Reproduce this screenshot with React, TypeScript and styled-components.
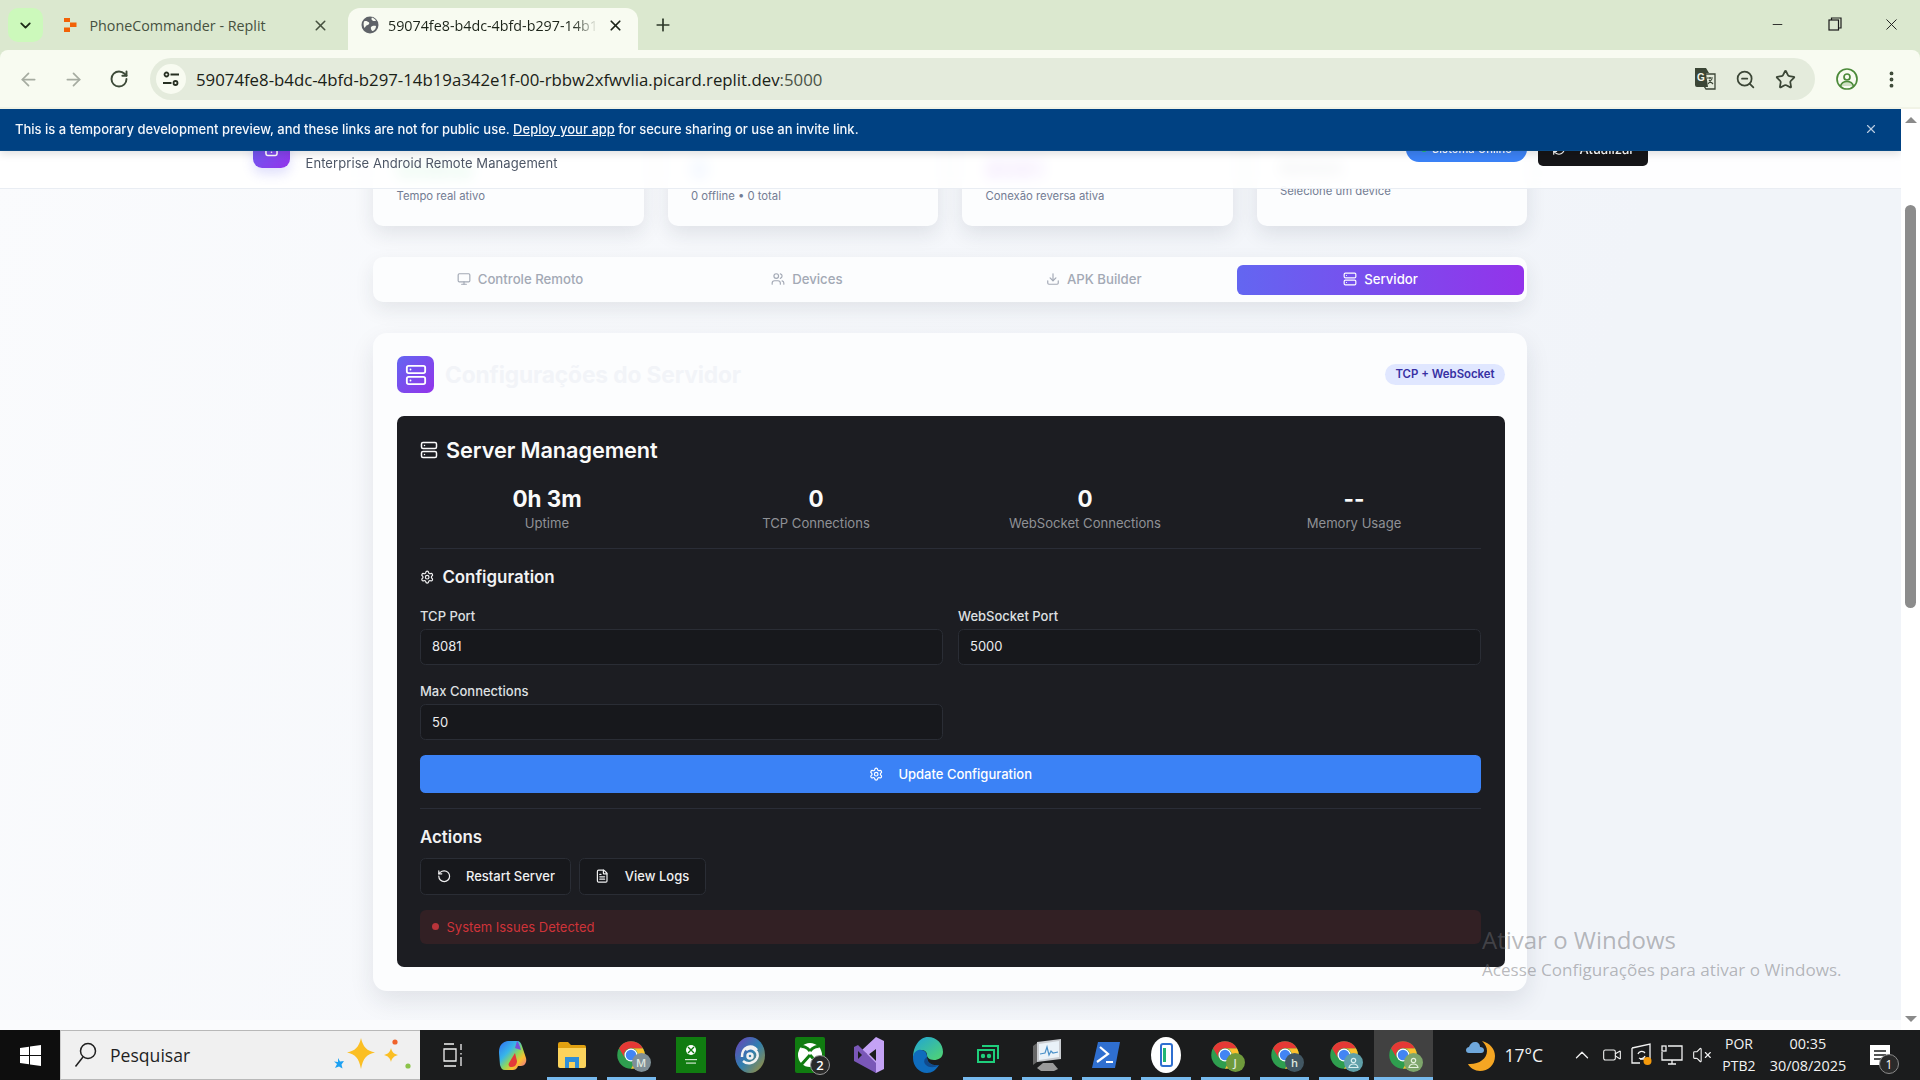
import React from "react";
import styled, { createGlobalStyle } from "styled-components";
import {
  ArrowLeft, ArrowRight, RotateCw, X, Plus, ChevronDown, Star, ZoomOut, EllipsisVertical,
  Server, Monitor, Users, Download, Settings, RotateCcw, FileText, RefreshCw, Smartphone, Minus,
  ChevronUp, VolumeX, Video,
} from "lucide-react";

const Global = createGlobalStyle`
  html, body { margin: 0; padding: 0; background: #fff; overflow: hidden; }
  * { box-sizing: border-box; }
`;

const UI = `"Open Sans", "Noto Sans", sans-serif`;
const WEB = `Inter, "Liberation Sans", sans-serif`;

const Screen = styled.div`
  width: 1920px; height: 1080px; display: flex; flex-direction: column; overflow: hidden; font-family: ${WEB};
`;

/* ---------- browser chrome ---------- */
const BrowserChrome = styled.div`
  height: 109px; flex: none; background: #dbe8cf; display: flex; flex-direction: column;
`;
const TabStrip = styled.div`
  height: 50px; display: flex; align-items: flex-end; padding-left: 8px; position: relative;
`;
const TabSwitcher = styled.div`
  width: 35px; height: 34px; margin-bottom: 8px; border-radius: 10px; background: #ccf9bb; color: #1c2a17;
  display: flex; align-items: center; justify-content: center;
`;
const Tab = styled.div<{ $active?: boolean }>`
  height: 42px; flex: none; width: ${p => (p.$active ? "290px" : "305px")};
  padding: ${p => (p.$active ? "0 14px 8px 12.5px" : "0 19px 8px 20px")};
  display: flex; align-items: center; gap: ${p => (p.$active ? "9.5px" : "12.5px")};
  border-radius: 12px 12px 0 0; background: ${p => (p.$active ? "#f8fbf1" : "transparent")};
  color: ${p => (p.$active ? "#1c2419" : "#46513f")};
  font: 400 14.3px ${UI}; white-space: nowrap;
`;
const TabTitle = styled.span<{ $fade?: boolean }>`
  flex: 1; overflow: hidden; ${p => p.$fade ? "-webkit-mask-image: linear-gradient(90deg,#000 88%,transparent);" : ""}
`;
const NewTab = styled.div`
  width: 24px; height: 42px; margin-left: 13px; padding-bottom: 8px; display: flex; align-items: center; justify-content: center; color: #2c3728;
`;
const WindowControls = styled.div`
  margin-left: auto; height: 50px; display: flex; align-items: center; color: #1a1a1a;
`;
const WinButton = styled.div`
  width: 57px; display: flex; justify-content: center; align-items: center; height: 48px; padding-bottom: 2px;
`;
const Toolbar = styled.div`
  height: 59px; background: #f8fbf1; border-radius: 8px 8px 0 0; display: flex; align-items: flex-start; padding: 8px 0 0 6px;
  border-bottom: 2px solid #f1f3e6;
`;
const NavButton = styled.div<{ $dim?: boolean }>`
  width: 45px; height: 42px; display: flex; align-items: center; justify-content: center;
  color: ${p => (p.$dim ? "#a6aca1" : "#3d4a38")};
`;
const AddressBar = styled.div`
  width: 1665px; margin-left: 9px; height: 42px; border-radius: 21px; background: #e4ebdc;
  display: flex; align-items: center; padding: 0 19px 0 6px; color: #1a2117; font: 400 16.8px ${UI};
`;
const SiteInfo = styled.div`
  width: 30px; height: 30px; border-radius: 50%; background: #f8fbf1; margin-right: 10px; display: flex; align-items: center; justify-content: center;
`;
const UrlPort = styled.span`color: #4a5346;`;
const AddressIcons = styled.div`
  margin-left: auto; display: flex; align-items: center; gap: 19px; color: #3b4636;
`;
const ToolEnd = styled.div`
  height: 42px; display: flex; align-items: center; color: #3d4a38; margin-left: 20px; gap: 22px;
`;

/* ---------- page ---------- */
const Body = styled.div`height: 921px; flex: none; display: flex;`;
const Viewport = styled.div`
  width: 1901px; position: relative; overflow: hidden; background: #fafbfd;
`;
const PageBg = styled.div`
  height: 911px; overflow: hidden; background: linear-gradient(105deg, #fafbfd 0%, #f1f4f9 78%);
  padding: 0 374px 0 373px;
`;
const StatGrid = styled.div`
  display: grid; grid-template-columns: repeat(4, 1fr); gap: 24px;
`;
const StatCard = styled.div`
  height: 117px; padding: 47px 23.5px 0; border-radius: 10px; background: #fcfdfe;
  box-shadow: 0 8px 20px rgba(30,41,59,.10);
`;
const StatCardValue = styled.div<{ $color: string; $small?: boolean }>`
  font-size: ${p => (p.$small ? "15px" : "24px")}; font-weight: 700; color: ${p => p.$color};
  height: ${p => (p.$small ? "24px" : "28px")}; line-height: ${p => (p.$small ? "24px" : "28px")};
  margin-bottom: ${p => (p.$small ? "3px" : "4px")};
`;
const StatCardSub = styled.div`font-size: 11.3px; line-height: 16px; color: #737c93;`;

const TabBar = styled.div`
  margin-top: 31px; height: 45px; padding: 7.5px 3px 7.5px 3.6px; border-radius: 10px; background: #fcfdfe;
  box-shadow: 0 8px 20px rgba(30,41,59,.09); display: grid; grid-template-columns: repeat(4, 1fr);
`;
const PageTab = styled.div<{ $active?: boolean }>`
  height: 30px; border-radius: 6px; display: flex; align-items: center; justify-content: center; gap: 7px; padding-bottom: 1px;
  font-size: 13.2px; font-weight: 500; color: ${p => (p.$active ? "#fff" : "#a3a9b5")};
  background: ${p => (p.$active ? "linear-gradient(90deg,#6366f1,#9333ea)" : "transparent")};
`;
const Panel = styled.section`
  margin-top: 31px; height: 658px; padding: 23px 22px 0 24px; border-radius: 14px; background: #fcfdfe;
  box-shadow: 0 10px 24px rgba(30,41,59,.10);
`;
const PanelHeader = styled.div`display: flex; align-items: center; gap: 11px; height: 37px;`;
const IconTile = styled.div`
  width: 37px; height: 37px; border-radius: 7px; color: #fff; display: flex; align-items: center; justify-content: center;
  background: linear-gradient(135deg,#6366f1,#9333ea);
`;
const PanelTitle = styled.h2`margin: 0; font-size: 22.7px; font-weight: 700; color: #f2f4f8; letter-spacing: -.1px;`;
const Badge = styled.span`
  margin-left: auto; height: 21px; padding: 0 10.4px 1px; border-radius: 11px; background: #e0e7ff; color: #3730a3;
  font-size: 11.4px; font-weight: 600; display: flex; align-items: center;
`;
const DarkCard = styled.div`
  margin-top: 23px; height: 551px; padding: 20px 24px 0 23px; border-radius: 7px; background: #1c1d22; color: #fafafa;
`;
const DarkTitle = styled.h3`
  margin: 0; height: 28px; display: flex; align-items: center; gap: 8px; font-size: 21.7px; font-weight: 600; letter-spacing: -.08px;
`;
const Metrics = styled.div`
  margin-top: 21px; padding-bottom: 16px; border-bottom: 1px solid #2a2d37; display: grid; grid-template-columns: repeat(4, 1fr); gap: 15px;
`;
const Metric = styled.div`text-align: center;`;
const MetricValue = styled.div`font-size: 22.4px; line-height: 28px; font-weight: 700;`;
const MetricLabel = styled.div`margin-top: 1px; font-size: 13.1px; line-height: 18px; color: #8f9196;`;
const SectionTitle = styled.h4<{ $mt: number }>`
  margin: ${p => p.$mt}px 0 0; height: 24px; display: flex; align-items: center; gap: 8px; font-size: 16.9px; font-weight: 600; color: #f2f2f3;
`;
const FormGrid = styled.div`
  margin-top: 19px; display: grid; grid-template-columns: 1fr 1fr; column-gap: 15px; row-gap: 18.5px;
`;
const Field = styled.div``;
const FieldLabel = styled.div`font-size: 13px; font-weight: 500; line-height: 16px; color: #dfe0e2; margin-bottom: 4.5px;`;
const FieldInput = styled.div`
  height: 36.4px; padding: 0 11px 1px; display: flex; align-items: center; border-radius: 5.5px; background: #17181c;
  border: 1px solid #2a2d35; font-size: 13px; color: #ececee;
`;
const PrimaryButton = styled.div`
  margin-top: 15.1px; height: 38px; border-radius: 5.5px; background: #3b82f6; color: #fff; font-size: 13px; font-weight: 500;
  display: flex; align-items: center; justify-content: center; gap: 15px;
`;
const Divider = styled.div`margin-top: 15px; height: 1px; background: #2a2d37;`;
const ActionRow = styled.div`margin-top: 8.4px; display: flex; gap: 7.5px;`;
const GhostButton = styled.div`
  height: 37px; padding: 0 15.5px; display: flex; align-items: center; gap: 15px; border-radius: 5.5px; background: #17181c;
  border: 1px solid #2a2d35; font-size: 13px; font-weight: 500; color: #f0f0f1;
`;
const Alert = styled.div`
  margin-top: 15.6px; height: 34px; padding: 0 12px 1px; border-radius: 6px; background: #322024; color: #cf3339;
  display: flex; align-items: center; gap: 7.5px; font-size: 13px;
`;
const AlertDot = styled.span`width: 7px; height: 7px; border-radius: 50%; background: #b9343a;`;

/* overlays */
const Header = styled.header`
  position: absolute; left: 0; right: 0; top: 0; height: 80px; padding: 0 253px 0 253px;
  display: flex; align-items: center; gap: 15.5px; background: rgba(255,255,255,.88);
  backdrop-filter: blur(7px); border-bottom: 1px solid #e9edf3;
`;
const BrandTile = styled.div`
  width: 37px; height: 38px; border-radius: 9px; background: linear-gradient(135deg,#6366f1,#9333ea); color: #fff;
  display: flex; align-items: flex-end; justify-content: center; padding-bottom: 11px;
  box-shadow: 0 6px 12px rgba(99,102,241,.2);
`;
const BrandText = styled.div`display: flex; flex-direction: column; justify-content: flex-end; height: 47px;`;
const BrandSub = styled.div`font-size: 13px; line-height: 18px; color: #4d5666; letter-spacing: .08px;`;
const HeaderActions = styled.div`margin-left: auto; display: flex; align-items: center; gap: 11px;`;
const OnlinePill = styled.div`
  width: 121px; height: 26px; border-radius: 13px; background: #3b82f6; color: #fff; font-size: 11.2px; font-weight: 500;
  display: flex; align-items: center; justify-content: center; gap: 5px;
`;
const OnlineDot = styled.span`width: 6px; height: 6px; border-radius: 50%; background: #22c55e;`;
const RefreshBtn = styled.div`
  width: 110px; height: 34px; border-radius: 5px; background: #151518; color: #fff; font-size: 13px; font-weight: 500;
  display: flex; align-items: center; justify-content: center; gap: 14px;
`;
const Banner = styled.div`
  position: absolute; left: 0; right: 0; top: 0; height: 42px; padding: 0 23px 1px 15px; background: #004182; color: #f4f7fb;
  display: flex; align-items: center; font-size: 13px; font-weight: 500; border-bottom: 1px solid #0a4a85;
  box-shadow: 0 3px 8px rgba(0,0,0,.12);
`;
const BannerLink = styled.span`text-decoration: underline; margin: 0 3.4px;`;
const BannerClose = styled.div`margin-left: auto; color: #b9cbe0; display: flex;`;
const Watermark = styled.div`
  position: absolute; left: 1482px; top: 815px; font-family: "Open Sans", sans-serif; color: rgba(110,110,115,.48); pointer-events: none; white-space: nowrap;
`;
const WatermarkTitle = styled.div`font-size: 24px; line-height: 32px;`;
const WatermarkSub = styled.div`font-size: 17.1px; line-height: 24px; margin-top: 2px;`;

/* scrollbar */
const Scrollbar = styled.div`
  width: 19px; background: #fff; display: flex; flex-direction: column; align-items: center; position: relative;
`;
const ScrollArrow = styled.div<{ $down?: boolean }>`
  width: 0; height: 0; border-left: 6.5px solid transparent; border-right: 6.5px solid transparent;
  ${p => (p.$down ? "border-top: 6px solid #8a8a8a; margin-top: auto; margin-bottom: 8px;" : "border-bottom: 6px solid #8a8a8a; margin-top: 8px;")}
`;
const ScrollThumb = styled.div`
  width: 11px; height: 403px; border-radius: 6px; background: #8c8c8c; margin-top: 82px;
`;

/* ---------- taskbar ---------- */
const Taskbar = styled.div`
  height: 50px; flex: none; background: #1b1c1d; color: #f2f2f2; display: flex; align-items: stretch; font-family: ${UI};
`;
const StartButton = styled.div`
  width: 60px; background: #0e0e0e; display: flex; align-items: center; justify-content: center;
`;
const SearchBox = styled.div`
  width: 360px; background: #f0f0f0; border-top: 1px solid #b8b8b8; border-bottom: 1px solid #b8b8b8; border-left: 1px solid #ccc;
  color: #1f1f1f; display: flex; align-items: center; padding-left: 13px; gap: 13px; font-size: 17.6px; position: relative;
`;
const SearchArt = styled.div`margin-left: auto; margin-right: 9px; display: flex;`;
const TaskIcons = styled.div`display: flex; margin-left: 3.5px;`;
const TaskButton = styled.div<{ $on?: boolean; $active?: boolean }>`
  width: 59.4px; position: relative; display: flex; align-items: center; justify-content: center;
  background: ${p => (p.$active ? "#414141" : "transparent")};
  ${p => p.$on ? `&::after { content: ""; position: absolute; left: 5px; right: 5px; bottom: 0; height: 3px; background: #76b9ed; }` : ""}
  ${p => p.$active ? `&::after { left: 0; right: 0; }` : ""}
`;
const AppBadge = styled.span<{ $bg: string }>`
  position: absolute; left: 30px; top: 23px; width: 19px; height: 19px; border-radius: 50%; background: ${p => p.$bg};
  display: flex; align-items: center; justify-content: center; font: 600 11px ${UI}; color: #dfe7df;
`;
const CountBadge = styled.span`
  position: absolute; left: 30px; top: 25px; width: 20px; height: 20px; border-radius: 50%; background: #2a2a2a; border: 1px solid #9a9a9a;
  display: flex; align-items: center; justify-content: center; font: 600 13px ${UI}; color: #fff;
`;
const Weather = styled.div`display: flex; align-items: center; margin-left: 32.7px; gap: 8.6px; font-size: 17.5px;`;
const TrayIcon = styled.div<{ $first?: boolean }>`
  width: 30px; display: flex; align-items: center; justify-content: center; margin-left: ${p => (p.$first ? "24px" : "0")}; position: relative;
`;
const Lang = styled.div`
  width: 36px; margin-left: 4px; display: flex; flex-direction: column; align-items: center; justify-content: center; gap: 4px; font-size: 14px; line-height: 18px;
`;
const Clock = styled.div`
  width: 76px; margin-left: 13px; display: flex; flex-direction: column; align-items: center; justify-content: center; gap: 4px; font-size: 14.4px; line-height: 18px; white-space: nowrap;
`;
const Notification = styled.div`
  width: 34px; margin-left: 17px; position: relative; display: flex; align-items: center; justify-content: center;
`;
const NotifCount = styled.span`
  position: absolute; left: 16px; top: 24px; width: 20px; height: 20px; border-radius: 50%; background: #2a2a2a; border: 1px solid #8a8a8a;
  display: flex; align-items: center; justify-content: center; font-size: 12px; color: #fff;
`;

/* ---------- drawn icons ---------- */
const ReplitLogo = () => (
  <svg width="14" height="16" viewBox="0 0 14 16"><path fill="#f26207" d="M1 1h6v4H1zM7 5.5h6.5v4.5H7zM1 10.5h6V15H1z" /></svg>
);
const FilledGlobe = () => (
  <svg width="18" height="18" viewBox="0 0 18 18">
    <circle cx="9" cy="9" r="8.500" fill="#5f6368" />
    <path fill="#f8fbf1" d="M3 5.500c2-1 3 0 4.500.5 1 .5 1 2 0 2.500-1 .8-2 .5-2.500 1.500L3.500 12C2.500 10 2.300 7.500 3 5.500zM11 1.500c1.500.5 3 1.500 4 3-1 1-2.500.5-3.500 0-1-.5-1.500-2-.5-3zM10 11c1-1 3-1.500 5-1 0 2-1 4-3 5-1.500 0-2.500-2.500-2-4z" />
  </svg>
);
const SiteTune = () => (
  <svg width="18" height="18" viewBox="0 0 18 18" fill="none" stroke="#273022" strokeWidth="1.8">
    <circle cx="4.5" cy="4.5" r="2" /><path d="M8.5 4.5H17M1 13h8.5" /><circle cx="13.5" cy="13" r="2" />
  </svg>
);
const TranslateIcon = () => (
  <svg width="22" height="24" viewBox="0 0 22 24">
    <path fill="#3b4636" d="M1 1h11l3 5h-3l2 14H3a2 2 0 0 1-2-2z" />
    <path fill="none" stroke="#3b4636" strokeWidth="1.3" d="M10 7h11v15H12l-2-3" />
    <text x="3" y="14" fontSize="10" fontWeight="700" fill="#f3f5ec" fontFamily="Liberation Sans">G</text>
    <path stroke="#3b4636" strokeWidth="1.2" d="M13 11h6M16 10v2M14 17l4-5M15 13l4 4" fill="none" />
  </svg>
);
const ProfileIcon = () => (
  <svg width="24" height="24" viewBox="0 0 24 24" fill="none" stroke="#4c8a3a" strokeWidth="1.7">
    <circle cx="12" cy="12" r="10" /><circle cx="12" cy="10" r="3" /><path d="M5.5 19c1-3.5 4-4.5 6.5-4.5s5.500 1 6.500 4.500" fill="#cfe0c4" />
  </svg>
);
const WinLogo = () => (
  <svg width="21" height="21" viewBox="0 0 21 21" fill="#fff"><path d="M0 3l9-1.300V10H0zM10 1.500 21 0v10H10zM0 11h9v8.300L0 18zM10 11h11v10l-11-1.500z" /></svg>
);
const SearchGlass = () => (
  <svg width="23" height="26" viewBox="0 0 23 26" fill="none" stroke="#1f1f1f" strokeWidth="1.500">
    <circle cx="14" cy="9" r="7.500" /><path d="M9 15L1.500 24.500" />
  </svg>
);
const Sparkles = () => (
  <svg width="80" height="38" viewBox="0 0 80 38">
    <path fill="#fbbf24" d="M30 2c2 9 6 13 14 14.500C36 18 32 22 30 33c-2-11-6-15-14-16.500C24 15 28 11 30 2z" />
    <path fill="#fbbf24" d="M60 12c1 4 3 6 7 7-4 1-6 3-7 7-1-4-3-6-7-7 4-1 6-3 7-7z" />
    <path fill="#1da1f2" d="M7 22l2 3.500 4-.5-2.500 3.500 1 4-3.500-2-4 1.500 2-4-3-2.500 4 .5z" />
    <circle cx="64" cy="6" r="2.600" fill="#f0622a" /><circle cx="77" cy="30" r="2.600" fill="#8bc34a" />
  </svg>
);
const TaskView = () => (
  <svg width="20" height="24" viewBox="0 0 20 24" fill="none" stroke="#f2f2f2" strokeWidth="1.300">
    <path d="M1 1h10M1 23h12M1 6h12v12H1zM18 1v6M18 10v1.500M18 14v9" />
  </svg>
);
const Copilot = () => (
  <svg width="29" height="30" viewBox="0 0 29 30">
    <defs><linearGradient id="cp" x1="0" y1="0" x2="1" y2="1"><stop offset="0" stopColor="#2f6ff5" /><stop offset=".35" stopColor="#38b6e8" /><stop offset=".55" stopColor="#8fd85c" /><stop offset=".72" stopColor="#fbc02d" /><stop offset="1" stopColor="#e85aa8" /></linearGradient></defs>
    <path fill="url(#cp)" d="M10 1h9c3 0 4 2 5 5l4 12c1 4-1 8-5 8h-3l-1 2c-1 1-2 2-4 2H7c-3 0-4-2-5-5L1 13c0-5 1-8 4-10 1-1 3-2 5-2z" />
    <path fill="#e33a3a" d="M11 23l6-10 2 8c0 3-2 6-5 6h-2c-1-1-2-2-1-4z" />
    <path fill="#7a4fd6" d="M19 1c2 2 3 6 4 9l-6-2z" />
  </svg>
);
const Explorer = () => (
  <svg width="28" height="26" viewBox="0 0 28 26">
    <path fill="#e0a010" d="M0 2a2 2 0 0 1 2-2h8l3 3h13a2 2 0 0 1 2 2v6H0z" />
    <path fill="#fbd35c" d="M0 6h28v18a2 2 0 0 1-2 2H2a2 2 0 0 1-2-2z" />
    <path fill="#2f8fd8" d="M7 15h14v11h-4v-6h-6v6H7z" />
  </svg>
);
const ChromeIcon = ({ size = 30 }: { size?: number }) => (
  <svg width={size} height={size} viewBox="0 0 24 24">
    <circle cx="12" cy="12" r="11" fill="#2f9e4f" />
    <path fill="#fbc02d" d="M12 6.500h9.530A11 11 0 0 1 12 23l4.760-8.250A5.500 5.500 0 0 0 12 6.500z" />
    <path fill="#e53935" d="M12 1a11 11 0 0 1 9.530 5.500H12a5.500 5.500 0 0 0-4.760 8.250L2.470 6.500A11 11 0 0 1 12 1z" />
    <circle cx="12" cy="12" r="5.200" fill="#fff" /><circle cx="12" cy="12" r="4.200" fill="#4285f4" />
  </svg>
);
const XCloud = () => (
  <svg width="30" height="36" viewBox="0 0 30 36">
    <rect width="30" height="36" fill="#107c10" />
    <circle cx="15" cy="13" r="5" fill="#fff" />
    <path stroke="#107c10" strokeWidth="1.400" d="M12 10l6 6M18 10l-6 6" />
    <rect x="9" y="22" width="12" height="1.200" fill="#cfe6cf" /><rect x="10" y="25.500" width="10" height="1.200" fill="#cfe6cf" />
  </svg>
);
const Ubisoft = () => (
  <svg width="30" height="36" viewBox="0 0 30 36">
    <defs><linearGradient id="ub" x1="0" y1="0" x2="1" y2="1"><stop offset="0" stopColor="#6e3fb8" /><stop offset=".5" stopColor="#2f7fb0" /><stop offset="1" stopColor="#a9912f" /></linearGradient></defs>
    <ellipse cx="15" cy="18" rx="15" ry="18" fill="url(#ub)" />
    <g fill="none" stroke="#f2f2f2" strokeWidth="2.500"><path d="M7 20a8.500 10 0 0 1 15-7" /><path d="M8 24a9 9 0 0 0 14-3 7 7 0 0 0-11-8" /><circle cx="15" cy="19" r="2.500" /></g>
  </svg>
);
const XboxIcon = () => (
  <svg width="30" height="36" viewBox="0 0 30 36">
    <rect width="30" height="36" rx="2" fill="#107c10" />
    <circle cx="15" cy="18" r="12" fill="#fff" />
    <path d="M15 14c-3-4-7-5-9-4M15 14c3-4 7-5 9-4M15 18L6 28M15 18l9 10" stroke="#107c10" strokeWidth="3" fill="none" />
  </svg>
);
const VisualStudio = () => (
  <svg width="30" height="36" viewBox="0 0 30 36">
    <path fill="#c4a2f5" d="M22 0l8 4v28l-8 4-14-15 6-5 8 8V12l-8 6-6-5z" />
    <path fill="#7a57b8" d="M0 10l4-2 18 18v10L0 24zM4 14v8l4-4z" />
  </svg>
);
const EdgeIcon = () => (
  <svg width="30" height="36" viewBox="0 0 30 36">
    <defs>
      <linearGradient id="eg" x1="0" y1="0" x2="1" y2="1"><stop offset="0" stopColor="#1fa3d8" /><stop offset="1" stopColor="#53d66e" /></linearGradient>
    </defs>
    <path fill="url(#eg)" d="M15 0c9 0 15 7 15 15 0 6-5 8-9 8-5 0-7-3-7-5 0-4-4-6-8-4-3 1-5 4-6 7 0-11 6-21 15-21z" />
    <path fill="#0f6cbd" d="M0 21c0-5 4-9 8-8 4 0 6 3 6 7 0 6 5 9 12 8-3 5-7 8-12 8C6 36 0 29 0 21z" />
    <path fill="#114a8b" d="M14 20c0 6 5 9 12 8-4 3-10 3-13 0-3-3-2-6 1-8z" />
  </svg>
);
const GreenBot = () => (
  <svg width="22" height="20" viewBox="0 0 22 20" fill="none" stroke="#1fcf7c" strokeWidth="2">
    <path d="M5 1h16v13M1 5h16v12H1z" /><circle cx="6" cy="11" r="1.200" fill="#1fcf7c" /><circle cx="12" cy="11" r="1.200" fill="#1fcf7c" />
  </svg>
);
const PerfMon = () => (
  <svg width="28" height="32" viewBox="0 0 28 32">
    <path fill="#c9ccd0" d="M4 3l24-3v20L4 23z" /><path fill="#eaf2f8" d="M6 5l20-3v16L6 21z" />
    <path fill="none" stroke="#4a90c8" strokeWidth="1.200" d="M7 15l5-1 2-6 2 8 2-4 2 2 5-1" />
    <path fill="#9a9a9a" d="M10 24h10l5 6-4 2H8l-4-3z" /><path fill="#666" d="M0 7l4-3v19l-4 3z" />
  </svg>
);
const PowerShell = () => (
  <svg width="28" height="26" viewBox="0 0 28 26">
    <path fill="#2f6fd0" d="M6 0h22l-5 26H0z" />
    <path fill="none" stroke="#fff" strokeWidth="2.200" d="M8 5l8 7-11 8M14 20h7" />
  </svg>
);
const PhoneLink = () => (
  <svg width="30" height="36" viewBox="0 0 30 36">
    <ellipse cx="15" cy="18" rx="15" ry="18" fill="#fff" />
    <rect x="10" y="7" width="11" height="22" rx="2" fill="none" stroke="#2f6fd0" strokeWidth="2" />
    <path d="M12 11h3v14h-3z" fill="#22b573" />
  </svg>
);
const PersonBadge = ({ tone }: { tone: string }) => (
  <svg width="13" height="13" viewBox="0 0 13 13" fill="none" stroke={tone} strokeWidth="1.200">
    <circle cx="6.500" cy="4.500" r="2.200" /><path d="M2 11.500c.5-2.500 2.500-3.500 4.500-3.500s4 1 4.500 3.500z" />
  </svg>
);
const MoonWeather = () => (
  <svg width="30" height="34" viewBox="0 0 30 34">
    <path fill="#f5a623" d="M16 3c8 2 13 8 13 15 0 9-7 15-15 15-5 0-10-3-12-7 10 1 19-5 19-13 0-4-2-7-5-10z" />
    <path fill="#6fa8dc" d="M3 15c-2 0-3-1-3-3s2-3 3-3c1-3 3-5 6-5 3 0 5 2 5 5 2 0 4 1 4 3s-1 3-3 3z" />
  </svg>
);
const CastIcon = () => (
  <svg width="22" height="24" viewBox="0 0 22 24" fill="none" stroke="#f2f2f2" strokeWidth="1.300">
    <path d="M1 5l18-4v15H9M1 5v15h8" /><path d="M7 11a4 4 0 0 1 6-2l1 1M14 13a4 4 0 0 1-6 2" />
    <circle cx="16.500" cy="18" r="4" fill="#f59a0c" stroke="none" />
  </svg>
);
const NetIcon = () => (
  <svg width="22" height="22" viewBox="0 0 22 22" fill="none" stroke="#f2f2f2" strokeWidth="1.300">
    <path d="M7 2h14v14H1V8" /><rect x="1" y="2" width="4" height="5" /><path d="M11 16v4M7 20h8" />
  </svg>
);
const NoteIcon = () => (
  <svg width="20" height="20" viewBox="0 0 20 20"><path fill="#fff" d="M0 0h20v20H0z" /><path stroke="#1b1c1d" strokeWidth="1.300" d="M4 6h12M4 10h12M4 14h9" /></svg>
);

const apps = [
  { el: <TaskView /> },
  { el: <Copilot /> },
  { el: <Explorer />, on: true },
  { el: <ChromeIcon />, on: true, badge: "M", bg: "#7f8f96" },
  { el: <XCloud /> },
  { el: <Ubisoft /> },
  { el: <XboxIcon />, count: "2" },
  { el: <VisualStudio /> },
  { el: <EdgeIcon /> },
  { el: <GreenBot />, on: true },
  { el: <PerfMon />, on: true },
  { el: <PowerShell />, on: true },
  { el: <PhoneLink />, on: true },
  { el: <ChromeIcon />, on: true, badge: "J", bg: "#6f9a3c" },
  { el: <ChromeIcon />, on: true, badge: "h", bg: "#425763" },
  { el: <ChromeIcon />, on: true, person: "#d8eef0", bg: "#5f9fa8" },
  { el: <ChromeIcon />, on: true, active: true, person: "#e4f0dc", bg: "#7da56b" },
];

export default function App() {
  return (
    <Screen>
      <Global />
      <BrowserChrome>
        <TabStrip>
          <TabSwitcher><ChevronDown size={17} strokeWidth={2.6} /></TabSwitcher>
          <Tab>
            <ReplitLogo />
            <TabTitle>PhoneCommander - Replit</TabTitle>
            <X size={17} strokeWidth={2.2} />
          </Tab>
          <Tab $active>
            <FilledGlobe />
            <TabTitle $fade>59074fe8-b4dc-4bfd-b297-14b19a342e1f-00</TabTitle>
            <X size={17} strokeWidth={2.4} />
          </Tab>
          <NewTab><Plus size={20} strokeWidth={2} /></NewTab>
          <WindowControls>
            <WinButton><Minus size={15} strokeWidth={1.4} /></WinButton>
            <WinButton><svg width="14" height="14" viewBox="0 0 14 14" fill="none" stroke="#1a1a1a" strokeWidth="1.200"><rect x="1" y="3" width="9.500" height="10" /><path d="M3.500 3V1H13v10h-2.500" /></svg></WinButton>
            <WinButton><X size={19} strokeWidth={1.2} /></WinButton>
          </WindowControls>
        </TabStrip>
        <Toolbar>
          <NavButton $dim><ArrowLeft size={21} /></NavButton>
          <NavButton $dim><ArrowRight size={21} /></NavButton>
          <NavButton><RotateCw size={20} strokeWidth={2.3} /></NavButton>
          <AddressBar>
            <SiteInfo><SiteTune /></SiteInfo>
            <span>59074fe8-b4dc-4bfd-b297-14b19a342e1f-00-rbbw2xfwvlia.picard.replit.dev<UrlPort>:5000</UrlPort></span>
            <AddressIcons>
              <TranslateIcon />
              <ZoomOut size={21} strokeWidth={2} />
              <Star size={21} strokeWidth={2} />
            </AddressIcons>
          </AddressBar>
          <ToolEnd>
            <ProfileIcon />
            <EllipsisVertical size={21} strokeWidth={2.4} />
          </ToolEnd>
        </Toolbar>
      </BrowserChrome>

      <Body>
        <Viewport>
          <PageBg>
            <StatGrid>
              <StatCard><StatCardValue $color="#22c55e">Online</StatCardValue><StatCardSub>Tempo real ativo</StatCardSub></StatCard>
              <StatCard><StatCardValue $color="#3b82f6">0</StatCardValue><StatCardSub>0 offline • 0 total</StatCardSub></StatCard>
              <StatCard><StatCardValue $color="#9333ea">8081</StatCardValue><StatCardSub>Conexão reversa ativa</StatCardSub></StatCard>
              <StatCard><StatCardValue $color="#6b7280" $small>Nenhum</StatCardValue><StatCardSub>Selecione um device</StatCardSub></StatCard>
            </StatGrid>
            <TabBar>
              <PageTab><Monitor size={14} />Controle Remoto</PageTab>
              <PageTab><Users size={14} />Devices</PageTab>
              <PageTab><Download size={14} />APK Builder</PageTab>
              <PageTab $active><Server size={14} />Servidor</PageTab>
            </TabBar>
            <Panel>
              <PanelHeader>
                <IconTile><Server size={22} strokeWidth={2} /></IconTile>
                <PanelTitle>Configurações do Servidor</PanelTitle>
                <Badge>TCP + WebSocket</Badge>
              </PanelHeader>
              <DarkCard>
                <DarkTitle><Server size={18} />Server Management</DarkTitle>
                <Metrics>
                  <Metric><MetricValue>0h 3m</MetricValue><MetricLabel>Uptime</MetricLabel></Metric>
                  <Metric><MetricValue>0</MetricValue><MetricLabel>TCP Connections</MetricLabel></Metric>
                  <Metric><MetricValue>0</MetricValue><MetricLabel>WebSocket Connections</MetricLabel></Metric>
                  <Metric><MetricValue>--</MetricValue><MetricLabel>Memory Usage</MetricLabel></Metric>
                </Metrics>
                <SectionTitle $mt={16}><Settings size={14.4} />Configuration</SectionTitle>
                <FormGrid>
                  <Field><FieldLabel>TCP Port</FieldLabel><FieldInput>8081</FieldInput></Field>
                  <Field><FieldLabel>WebSocket Port</FieldLabel><FieldInput>5000</FieldInput></Field>
                  <Field><FieldLabel>Max Connections</FieldLabel><FieldInput>50</FieldInput></Field>
                </FormGrid>
                <PrimaryButton><Settings size={14.4} />Update Configuration</PrimaryButton>
                <Divider />
                <SectionTitle $mt={16}>Actions</SectionTitle>
                <ActionRow>
                  <GhostButton><RotateCcw size={14.4} />Restart Server</GhostButton>
                  <GhostButton><FileText size={14.4} />View Logs</GhostButton>
                </ActionRow>
                <Alert><AlertDot />System Issues Detected</Alert>
              </DarkCard>
            </Panel>
          </PageBg>

          <Header>
            <BrandTile><Smartphone size={19} /></BrandTile>
            <BrandText><BrandSub>Enterprise Android Remote Management</BrandSub></BrandText>
            <HeaderActions>
              <OnlinePill><OnlineDot />Sistema Online</OnlinePill>
              <RefreshBtn><RefreshCw size={14} />Atualizar</RefreshBtn>
            </HeaderActions>
          </Header>
          <Banner>
            This is a temporary development preview, and these links are not for public use.
            <BannerLink> Deploy your app </BannerLink>
            for secure sharing or use an invite link.
            <BannerClose><X size={14} /></BannerClose>
          </Banner>
          <Watermark>
            <WatermarkTitle>Ativar o Windows</WatermarkTitle>
            <WatermarkSub>Acesse Configurações para ativar o Windows.</WatermarkSub>
          </Watermark>
        </Viewport>
        <Scrollbar>
          <ScrollArrow />
          <ScrollThumb />
          <ScrollArrow $down />
        </Scrollbar>
      </Body>

      <Taskbar>
        <StartButton><WinLogo /></StartButton>
        <SearchBox>
          <SearchGlass />
          Pesquisar
          <SearchArt><Sparkles /></SearchArt>
        </SearchBox>
        <TaskIcons>
          {apps.map((a, i) => (
            <TaskButton key={i} $on={a.on} $active={a.active}>
              {a.el}
              {a.badge && <AppBadge $bg={a.bg!}>{a.badge}</AppBadge>}
              {a.person && <AppBadge $bg={a.bg!}><PersonBadge tone={a.person} /></AppBadge>}
              {a.count && <CountBadge>{a.count}</CountBadge>}
            </TaskButton>
          ))}
        </TaskIcons>
        <Weather><MoonWeather />17°C</Weather>
        <TrayIcon $first><ChevronUp size={22} strokeWidth={1.4} /></TrayIcon>
        <TrayIcon><Video size={20} strokeWidth={1.3} /></TrayIcon>
        <TrayIcon><CastIcon /></TrayIcon>
        <TrayIcon><NetIcon /></TrayIcon>
        <TrayIcon><VolumeX size={20} strokeWidth={1.3} /></TrayIcon>
        <Lang><span>POR</span><span>PTB2</span></Lang>
        <Clock><span>00:35</span><span>30/08/2025</span></Clock>
        <Notification><NoteIcon /><NotifCount>1</NotifCount></Notification>
      </Taskbar>
    </Screen>
  );
}
